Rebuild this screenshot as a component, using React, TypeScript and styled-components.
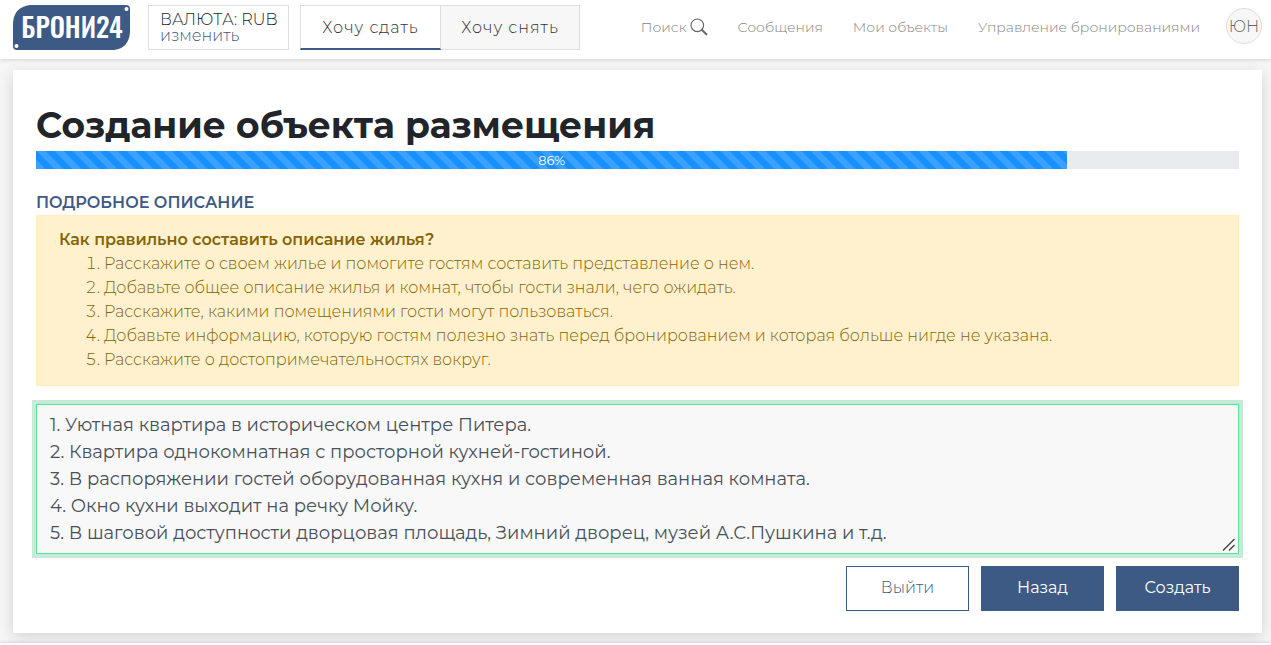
import React from "react";
import styled, { createGlobalStyle } from "styled-components";

const navy = "#3d5a85";

const GlobalStyle = createGlobalStyle`
  *, *::before, *::after { box-sizing: border-box; }
  body {
    margin: 0;
    background: #f6f6f6;
    color: #212529;
    font-family: Montserrat, Inter, "Open Sans", sans-serif;
    font-size: 16px;
    line-height: 24px;
  }
  button, textarea { font-family: inherit; }
`;

const Header = styled.header`
  display: flex;
  align-items: flex-start;
  height: 59px;
  padding: 5px 9px 0 13px;
  background: #fff;
  box-shadow: 0 1px 4px rgba(0, 0, 0, 0.15);
`;

const Logo = styled.a`
  flex: none;
  width: 117px;
  height: 45px;
  svg { display: block; }
`;

const Currency = styled.div`
  flex: none;
  width: 141px;
  height: 45px;
  margin-left: 18px;
  padding: 6px 0 0 11px;
  border: 1px solid #dedede;
  font-size: 16px;
  line-height: 16px;
  font-weight: 300;
  white-space: nowrap;
`;

const CurrencyLink = styled.a`
  display: block;
  color: ${navy};
  text-decoration: none;
`;

const Tabs = styled.div`
  display: flex;
  flex: none;
  margin-left: 11px;
`;

const Tab = styled.button<{ $active?: boolean }>`
  width: ${(p) => (p.$active ? 141 : 139)}px;
  height: 45px;
  padding: 0;
  border: 1px solid #dedede;
  border-left-width: ${(p) => (p.$active ? 1 : 0)}px;
  border-bottom: ${(p) => (p.$active ? `2px solid ${navy}` : "1px solid #dedede")};
  background: ${(p) => (p.$active ? "#fff" : "#f7f7f7")};
  color: #333;
  font-size: 16px;
  font-weight: 300;
  letter-spacing: 1px;
`;

const Nav = styled.nav`
  display: flex;
  align-items: center;
  gap: 30px;
  height: 44px;
  margin-left: auto;
`;

const NavLink = styled.a`
  display: flex;
  align-items: center;
  gap: 3px;
  color: #858585;
  font-size: 14px;
  font-weight: 300;
  text-decoration: none;
  white-space: nowrap;
`;

const Avatar = styled.button`
  flex: none;
  width: 36px;
  height: 36px;
  margin: 3px 0 0 26px;
  padding: 0;
  border: 1px solid #dedede;
  border-radius: 50%;
  background: #f7f7f7;
  color: #666;
  font-size: 16px;
  font-weight: 300;
`;

const Card = styled.main`
  margin: 11px 9px 10px 13px;
  padding: 35px 23px 22px;
  background: #fff;
  box-shadow: 0 4px 14px rgba(0, 0, 0, 0.14);
`;

const Title = styled.h1`
  margin: 0 0 6px;
  font-size: 36px;
  line-height: 40px;
  font-weight: 700;
`;

const Progress = styled.div`
  height: 18px;
  background: #e9ecef;
`;

const ProgressBar = styled.div`
  height: 18px;
  background: #1890ff linear-gradient(45deg, rgba(255, 255, 255, 0.15) 25%, transparent 25%, transparent 50%, rgba(255, 255, 255, 0.15) 50%, rgba(255, 255, 255, 0.15) 75%, transparent 75%, transparent) 0 0 / 18px 18px;
  color: #fff;
  font-size: 13px;
  line-height: 18px;
  text-align: center;
`;

const FieldLabel = styled.label`
  display: block;
  margin: 22px 0 0;
  color: ${navy};
  font-size: 16px;
  font-weight: 600;
  text-transform: uppercase;
`;

const Tips = styled.section`
  padding: 12px 22px 13px;
  border: 1px solid #ffeeba;
  background: #fff1cd;
  color: #856404;
  font-size: 16px;
  font-weight: 300;
`;

const TipsTitle = styled.strong`
  display: block;
  font-weight: 600;
`;

const TipsList = styled.ol`
  margin: 0;
  padding-left: 45px;
`;

const Field = styled.div`
  position: relative;
  margin-top: 18px;
`;

const Grip = styled.svg`
  position: absolute;
  right: 3px;
  bottom: 2px;
  pointer-events: none;
`;

const Description = styled.textarea`
  display: block;
  width: 100%;
  height: 150px;
  padding: 7px 13px;
  border: 1px solid #51e898;
  border-radius: 0;
  outline: none;
  background: #f8f8f8;
  box-shadow: 0 0 0 4px #c6eada;
  color: #495057;
  font-size: 18px;
  line-height: 27px;
  font-weight: 400;
  resize: none;
  overflow: hidden;
`;

const Actions = styled.div`
  display: flex;
  justify-content: flex-end;
  gap: 12px;
  margin-top: 12px;
`;

const Action = styled.button<{ $outline?: boolean }>`
  width: 123px;
  height: 45px;
  padding: 0 0 2px;
  border: 1px solid ${navy};
  background: ${(p) => (p.$outline ? "#fff" : navy)};
  color: ${(p) => (p.$outline ? navy : "#fff")};
  font-size: 16px;
  font-weight: ${(p) => (p.$outline ? 300 : 400)};
`;

const Footer = styled.footer`
  height: 2px;
  background: #fff;
  box-shadow: 0 -1px 3px rgba(0, 0, 0, 0.15);
`;

const step = 6;
const stepCount = 7;
const progress = (step / stepCount) * 100;
const percent = Math.round(progress);

const tips = [
  "Расскажите о своем жилье и помогите гостям составить представление о нем.",
  "Добавьте общее описание жилья и комнат, чтобы гости знали, чего ожидать.",
  "Расскажите, какими помещениями гости могут пользоваться.",
  "Добавьте информацию, которую гостям полезно знать перед бронированием и которая больше нигде не указана.",
  "Расскажите о достопримечательностях вокруг.",
];

const description = [
  "1. Уютная квартира в историческом центре Питера.",
  "2. Квартира однокомнатная с просторной кухней-гостиной.",
  "3. В распоряжении гостей оборудованная кухня и современная ванная комната.",
  "4. Окно кухни выходит на речку Мойку.",
  "5. В шаговой доступности дворцовая площадь, Зимний дворец, музей А.С.Пушкина и т.д.",
].join("\n");

const SearchIcon = () => (
  <svg width="18" height="18" viewBox="0 0 18 18" fill="none" stroke="#666" aria-hidden="true">
    <circle cx="7.3" cy="7.3" r="6.3" strokeWidth="1.1" />
    <path d="M11.8 11.8 16.4 16.2" strokeWidth="2" strokeLinecap="round" />
  </svg>
);

export default function App() {
  return (
    <>
      <GlobalStyle />
      <Header>
        <Logo href="#">
          <svg width="117" height="45" viewBox="0 0 117 45">
            <path d="M17 0H113Q117 0 117 4V27Q116 43 101 45H4Q0 45 0 41V18Q1 2 17 0Z" fill={navy} />
            <circle cx="113.5" cy="4" r="2" fill="#fff" />
            <circle cx="3.5" cy="41" r="2" fill="#fff" />
            <text x="59" y="33" textAnchor="middle" fill="#fff" fontFamily="Oswald, 'Roboto Condensed', 'Liberation Sans Narrow', 'Open Sans', sans-serif" fontWeight="500" fontSize="27">
              БРОНИ24
            </text>
          </svg>
        </Logo>
        <Currency>
          ВАЛЮТА: RUB
          <CurrencyLink href="#">изменить</CurrencyLink>
        </Currency>
        <Tabs>
          <Tab type="button" $active>Хочу сдать</Tab>
          <Tab type="button">Хочу снять</Tab>
        </Tabs>
        <Nav>
          <NavLink href="#">Поиск <SearchIcon /></NavLink>
          <NavLink href="#">Сообщения</NavLink>
          <NavLink href="#">Мои объекты</NavLink>
          <NavLink href="#">Управление бронированиями</NavLink>
        </Nav>
        <Avatar type="button">ЮН</Avatar>
      </Header>
      <Card>
        <Title>Создание объекта размещения</Title>
        <Progress role="progressbar" aria-valuenow={percent} aria-valuemin={0} aria-valuemax={100}>
          <ProgressBar style={{ width: `${progress}%` }}>{percent}%</ProgressBar>
        </Progress>
        <FieldLabel htmlFor="description">Подробное описание</FieldLabel>
        <Tips>
          <TipsTitle>Как правильно составить описание жилья?</TipsTitle>
          <TipsList>
            {tips.map((tip) => (
              <li key={tip}>{tip}</li>
            ))}
          </TipsList>
        </Tips>
        <Field>
          <Description id="description" defaultValue={description} spellCheck={false} />
          <Grip width="14" height="14" viewBox="0 0 14 14" stroke="#444" strokeWidth="1.4" aria-hidden="true">
            <path d="M1 12.5 12.5 1M7 12.5 12.5 7" />
          </Grip>
        </Field>
        <Actions>
          <Action type="button" $outline>Выйти</Action>
          <Action type="button">Назад</Action>
          <Action type="button">Создать</Action>
        </Actions>
      </Card>
      <Footer />
    </>
  );
}
